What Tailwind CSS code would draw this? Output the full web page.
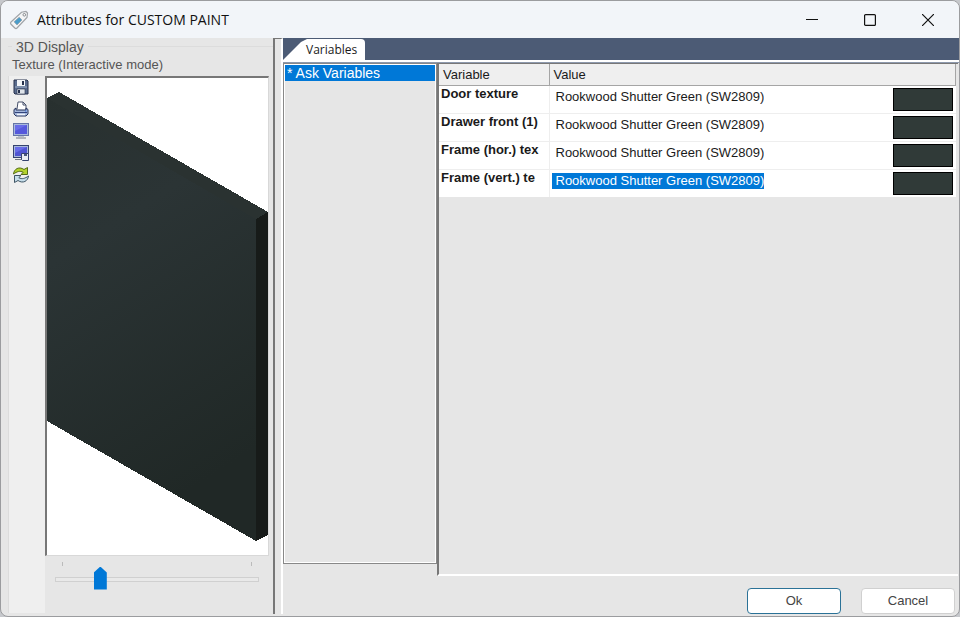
<!DOCTYPE html>
<html lang="en">
    <head>
        <meta charset="UTF-8" />
        <meta name="viewport" content="width=device-width, initial-scale=1.0" />
        <title>Attributes for CUSTOM PAINT</title>
        <script src="https://cdn.jsdelivr.net/npm/@tailwindcss/browser@4"></script>
    </head>
    <body class="bg-[#c6c8cc] font-['Liberation_Sans',sans-serif] text-[13px] leading-4 text-[#1a1a1a]">
        <div class="flex h-screen flex-col overflow-hidden rounded-lg border border-[#9b9c9f] bg-[#e6e6e6]">
            <!-- title bar -->
            <header class="flex h-[37px] shrink-0 items-center bg-[#f2f5f9] pr-[2px] pl-2">
                <svg class="size-5" viewBox="0 0 20 20" fill="none">
                    <path d="M2 12 12.500 2.200 17 1.500 18.500 3 18 7.500 8 18Q7 19 5.800 18L1.800 14Q1 13 2 12Z" fill="#f4f5f6" stroke="#a0a4a8" stroke-width="1.200" />
                    <path d="M5 11.800 10.200 7.200 13 10 8 15Z" fill="#4a9cc9" stroke="#9aa5ad" stroke-width=".8" />
                    <circle cx="15.300" cy="4.800" r="1.300" fill="#fff" stroke="#85898d" />
                </svg>
                <h1 class="ml-2 flex-1 font-['Open_Sans',sans-serif] text-sm text-[#111]">Attributes for CUSTOM PAINT</h1>
                <button class="flex h-full w-[58px] items-center justify-center" aria-label="Minimize">
                    <svg class="size-3" viewBox="0 0 12 12" stroke="#111"><path d="M0 5.500h12" /></svg>
                </button>
                <button class="flex h-full w-[58px] items-center justify-center" aria-label="Maximize">
                    <svg class="size-3" viewBox="0 0 12 12" fill="none" stroke="#111" stroke-width="1.200"><rect x=".6" y=".6" width="10.800" height="10.800" rx="1" /></svg>
                </button>
                <button class="flex h-full w-[58px] items-center justify-center" aria-label="Close">
                    <svg class="size-3" viewBox="0 0 12 12" stroke="#111" stroke-width="1.200"><path d="m0 0 12 12M12 0 0 12" /></svg>
                </button>
            </header>

            <main class="flex min-h-0 flex-1">
                <!-- 3D preview -->
                <section class="flex w-[272px] shrink-0 flex-col pb-[3px] pl-[7px] text-[#555]">
                    <div class="flex h-[17px] items-center">
                        <span class="w-1 border-t border-[#dcdcdc]"></span>
                        <h2 class="px-1 text-sm">3D Display</h2>
                        <span class="flex-1 border-t border-[#dcdcdc]"></span>
                    </div>
                    <p class="mt-[2px] mb-[3px] pl-1">Texture (Interactive mode)</p>
                    <div class="flex min-h-0 flex-1">
                        <div class="flex w-[37px] shrink-0 flex-col items-center gap-[6px] border-l border-[#dcdcdc] bg-[#efefef] pt-[3px] pr-3">
                            <button aria-label="Save">
                                <svg class="size-4" viewBox="0 0 16 16">
                                    <path d="M1 1h13l1 1v13H2l-1-1Z" fill="#5a6c8d" stroke="#26314c" />
                                    <path d="M4 1h8v6H4z" fill="#f2f5f8" />
                                    <path d="M9 2h2v4H9z" fill="#26314c" />
                                    <path d="M2 8h12" stroke="#9fb1cb" />
                                    <path d="M4 10h8v5H4z" fill="#dfe4ea" stroke="#26314c" stroke-width=".6" />
                                    <path d="M5 11h2v3H5z" fill="#26314c" />
                                </svg>
                            </button>
                            <button aria-label="Print">
                                <svg class="size-4" viewBox="0 0 16 16">
                                    <path d="M4 8 5 1h5l3 3v5" fill="#fff" stroke="#46506a" />
                                    <path d="M10 1v3h3" fill="none" stroke="#46506a" />
                                    <path d="M1 8.500 3 7v2h10V7l2 1.500V13l-2 2H3l-2-2Z" fill="#a6b8dc" stroke="#27345c" />
                                    <path d="M2 11.500h12" stroke="#33457b" />
                                    <path d="M4 13.500h8" stroke="#eff3fa" stroke-width="1.500" />
                                    <path d="M12 10h1.500" stroke="#3c74e0" />
                                </svg>
                            </button>
                            <button aria-label="Screen">
                                <svg class="size-4" viewBox="0 0 16 16">
                                    <rect x=".5" y=".5" width="15" height="12" fill="#a9b9dc" stroke="#6474a6" />
                                    <path d="M2 2h12v9H2z" fill="#5558dc" />
                                    <path d="M2 2h12L2 8Z" fill="#686ce8" />
                                    <path d="M5 13h6v1H5z" fill="#bcc3ce" />
                                    <path d="M3 15h10" stroke="#737985" />
                                </svg>
                            </button>
                            <button aria-label="Copy screen">
                                <svg class="size-4" viewBox="0 0 16 16">
                                    <rect x=".5" y=".5" width="15" height="12" fill="#a9b9dc" stroke="#35436f" />
                                    <path d="M2 2h12v9H2z" fill="#4f54d2" />
                                    <path d="M2 2h12L2 8Z" fill="#686ce8" />
                                    <path d="M2 14.500h7" stroke="#737985" />
                                    <path d="M8.500 8.500h7v7h-6l-1-1Z" fill="#e8ecf2" stroke="#35436f" />
                                    <path d="M11 9h3v2h-3z" fill="#47557c" />
                                </svg>
                            </button>
                            <button aria-label="Refresh">
                                <svg class="size-4" viewBox="0 0 16 16" stroke-linejoin="round">
                                    <path d="M.5 7C1 2 6-1 11 2.500L14.500.5V7.500H8l2.200-2.200C7 3.500 4 4.500.5 7Z" fill="#b3d22c" stroke="#546b18" />
                                    <path d="M15.500 9c-.5 5-5.500 8-10.500 4.500L1.500 15.500V8.500H8l-2.200 2.200c3.200 1.800 6.200.8 9.700-1.700Z" fill="#c6deeb" stroke="#3f5564" />
                                </svg>
                            </button>
                        </div>
                        <div class="flex min-w-0 flex-1 flex-col pr-1">
                            <div class="min-h-0 flex-1 border-t-2 border-l-2 border-r border-b border-t-[#777] border-r-[#d8d8d8] border-b-[#d8d8d8] border-l-[#777] bg-white">
                                <svg class="h-full w-full" viewBox="0 0 221 477" preserveAspectRatio="xMinYMin slice">
                                    <defs>
                                        <linearGradient id="front" x1="0" y1="0" x2=".3" y2="1">
                                            <stop offset="0" stop-color="#28302f" />
                                            <stop offset=".35" stop-color="#2b3435" />
                                            <stop offset="1" stop-color="#202826" />
                                        </linearGradient>
                                    </defs>
                                    <g shape-rendering="crispEdges">
                                        <path d="M0 20 12 14 221 134 209 141Z" fill="#2a3231" />
                                        <path d="M0 20 209 141V463L0 343Z" fill="url(#front)" />
                                        <path d="M209 141 221 134V457L209 463Z" fill="#171b19" />
                                    </g>
                                </svg>
                            </div>
                            <div class="h-[57px] px-[10px] pt-[6px]">
                                <div class="flex h-1 justify-between px-[7px]">
                                    <span class="border-l border-[#bbb]"></span>
                                    <span class="border-l border-[#bbb]"></span>
                                </div>
                                <input
                                    type="range"
                                    aria-label="Zoom"
                                    min="0"
                                    max="100"
                                    value="20"
                                    class="block h-[26px] w-full appearance-none bg-transparent [&::-webkit-slider-runnable-track]:h-[5px] [&::-webkit-slider-runnable-track]:border [&::-webkit-slider-runnable-track]:border-[#d0d0d0] [&::-webkit-slider-runnable-track]:bg-[#e9e9e9] [&::-webkit-slider-thumb]:-mt-[11px] [&::-webkit-slider-thumb]:h-[23px] [&::-webkit-slider-thumb]:w-[13px] [&::-webkit-slider-thumb]:appearance-none [&::-webkit-slider-thumb]:bg-[#0078d7] [&::-webkit-slider-thumb]:[clip-path:polygon(50%_0,100%_26%,100%_100%,0_100%,0_26%)]"
                                />
                            </div>
                        </div>
                    </div>
                </section>

                <!-- splitter -->
                <div class="mb-[2px] w-[10px] shrink-0 border-t border-r-2 border-l-2 border-t-[#777] border-r-white border-l-[#777] bg-[#e6e6e6]"></div>

                <section class="flex min-w-0 flex-1 flex-col">
                    <div role="tablist" class="flex h-[22px] items-end bg-[#4c5b75]">
                        <button role="tab" aria-selected="true" class="h-[21px] rounded-tr-sm bg-white pt-px pr-2 pl-[23px] font-['Open_Sans',sans-serif] text-xs [clip-path:polygon(0_100%,18px_3px,24px_0,100%_0,100%_100%)]">Variables</button>
                    </div>
                    <div class="h-[3px] border-b border-[#8d99ad] bg-white"></div>

                    <div class="flex min-h-0 flex-1">
                        <ul class="mb-3 w-[154px] shrink-0 self-stretch border border-[#888] shadow-[inset_-1px_-1px_#fff,inset_1px_1px_#fff]">
                            <li class="mx-px mt-px bg-[#0078d7] px-[2px] text-sm leading-4 text-white">* Ask Variables</li>
                        </ul>
                        <div class="mr-px min-w-0 flex-1 border-t border-b-2 border-l-2 border-t-[#777] border-b-white border-l-[#777] pr-[2px]">
                            <table class="w-full table-fixed border-collapse">
                                <thead>
                                    <tr class="h-[21px] border-b border-[#a5a5a5] bg-[#efefef] text-left">
                                        <th class="w-[110px] border-r border-[#a5a5a5] px-1 pt-[2px] font-normal">Variable</th>
                                        <th class="px-1 pt-[2px] font-normal">Value</th>
                                        <th class="w-[63px] border-r border-[#a5a5a5]" aria-label="Colour"></th>
                                    </tr>
                                </thead>
                                <tbody class="bg-white">
                                    <tr class="h-7 border-b border-[#eee]">
                                        <th scope="row" class="overflow-hidden border-r border-[#eee] pl-[2px] text-left align-top font-bold whitespace-nowrap">Door texture</th>
                                        <td class="pt-[3px] pl-[2px] align-top"><input aria-label="Door texture" value="Rookwood Shutter Green (SW2809)" class="block h-4 w-[212px] pl-1" /></td>
                                        <td><button aria-label="Pick door colour" class="block h-[23px] w-[60px] border border-black bg-[#303a38]"></button></td>
                                    </tr>
                                    <tr class="h-7 border-b border-[#eee]">
                                        <th scope="row" class="overflow-hidden border-r border-[#eee] pl-[2px] text-left align-top font-bold whitespace-nowrap">Drawer front (1)</th>
                                        <td class="pt-[3px] pl-[2px] align-top"><input aria-label="Drawer front (1)" value="Rookwood Shutter Green (SW2809)" class="block h-4 w-[212px] pl-1" /></td>
                                        <td><button aria-label="Pick drawer colour" class="block h-[23px] w-[60px] border border-black bg-[#303a38]"></button></td>
                                    </tr>
                                    <tr class="h-7 border-b border-[#eee]">
                                        <th scope="row" class="overflow-hidden border-r border-[#eee] pl-[2px] text-left align-top font-bold whitespace-nowrap">Frame (hor.) tex</th>
                                        <td class="pt-[3px] pl-[2px] align-top"><input aria-label="Frame (hor.) texture" value="Rookwood Shutter Green (SW2809)" class="block h-4 w-[212px] pl-1" /></td>
                                        <td><button aria-label="Pick horizontal frame colour" class="block h-[23px] w-[60px] border border-black bg-[#303a38]"></button></td>
                                    </tr>
                                    <tr class="h-7">
                                        <th scope="row" class="overflow-hidden border-r border-[#eee] pl-[2px] text-left align-top font-bold whitespace-nowrap">Frame (vert.) te</th>
                                        <td class="pt-[3px] pl-[2px] align-top"><input aria-label="Frame (vert.) texture" value="Rookwood Shutter Green (SW2809)" class="block h-4 w-[212px] bg-[#0078d7] pl-1 text-white" /></td>
                                        <td><button aria-label="Pick vertical frame colour" class="block h-[23px] w-[60px] border border-black bg-[#303a38]"></button></td>
                                    </tr>
                                </tbody>
                            </table>
                        </div>
                    </div>

                    <footer class="flex h-10 shrink-0 items-center justify-end gap-5 pt-[10px] pr-1 text-[#444]">
                        <button class="h-[26px] w-[94px] rounded border border-[#2b7297] bg-white">Ok</button>
                        <button class="h-[26px] w-[94px] rounded border border-[#d0d0d0] bg-white">Cancel</button>
                    </footer>
                </section>
            </main>
        </div>
    </body>
</html>
